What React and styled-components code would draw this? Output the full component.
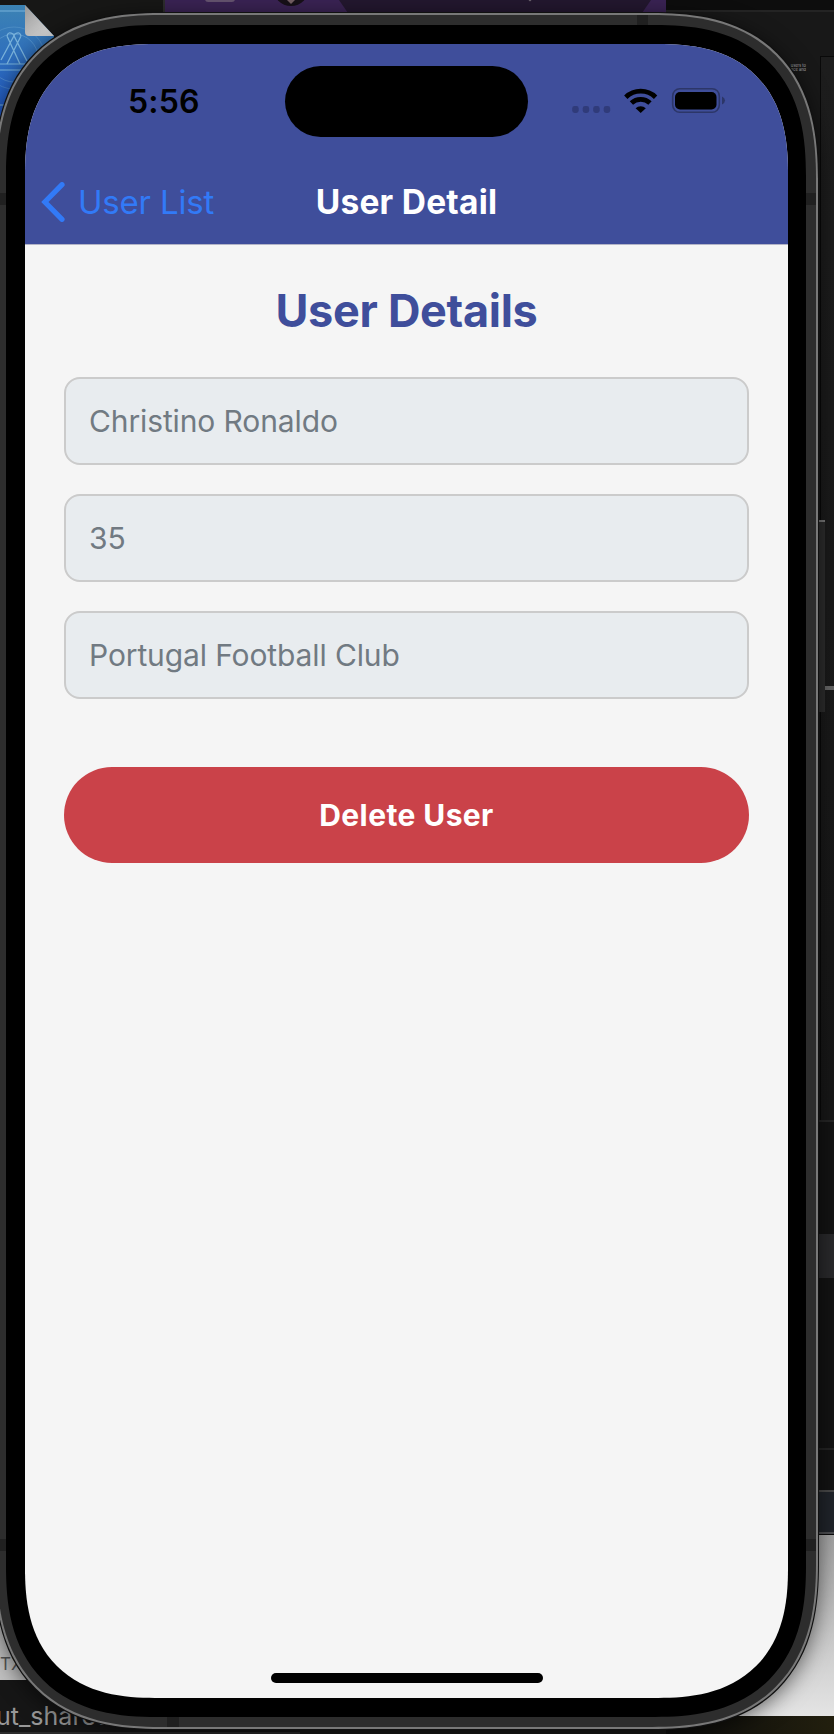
import React from 'react';
import styled, { createGlobalStyle } from 'styled-components';

const Global = createGlobalStyle`
  *{box-sizing:border-box}
  body{margin:0;background:#171716;overflow:hidden;font-family:Inter,"Liberation Sans",sans-serif}
`;
const Desktop = styled.main`
  position:relative;width:834px;height:1734px;overflow:hidden;background:#171716;
`;
const Backdrop = styled.svg`position:absolute;left:0;top:0;`;
const RightWindows = styled.aside`
  position:absolute;right:0;top:0;width:168px;height:1734px;display:flex;flex-direction:column;
`;
const Strip = styled.div`
  flex:none;height:${p => p.$h}px;background:${p => p.$bg};
`;
const BrowserStrip = styled(Strip)`
  display:flex;flex-direction:column;align-items:flex-end;padding-top:44px;
`;
const EditorEdge = styled.div`
  width:14px;flex:1;background:linear-gradient(#1d1d1d,#171717);border:solid #090909;border-width:1px 0 0 1px;
  padding-top:629px;
`;
const Divider = styled.div`height:4px;background:#656565;`;
const PageSnippet = styled.p`
  position:absolute;right:28px;top:64px;margin:0;font-size:4px;line-height:4px;color:#aaa;white-space:nowrap;
  text-align:right;
`;
const Files = styled.div`
  position:absolute;left:0;bottom:0;width:300px;height:134px;display:flex;flex-direction:column;
`;
const Thumbnail = styled.div`
  height:80px;width:70px;padding:55px 0 0;background:#c0c0c0;color:#555;font-size:17px;line-height:19px;
`;
const FileName = styled.div`
  height:54px;padding-top:20px;background:#161616;border-bottom:2px solid #2b2b2b;color:#989898;
  font-size:25px;line-height:32px;text-indent:-4px;
`;
const SideButton = styled.div`
  position:absolute;left:817px;top:520px;width:8px;height:192px;background:#2d2d2d;border-top:2px solid #777;
`;
const Shell = styled.section`
  position:absolute;left:-5px;top:13px;width:823px;height:1716px;padding:2px;
  border-radius:142px;background:#787878;box-shadow:0 0 0 1px #111,0 4px 22px rgba(0,0,0,.6);
  @supports (corner-shape:superellipse(1.3)){border-radius:166px;corner-shape:superellipse(1.3)}
`;
const Metal = styled.div`
  height:100%;padding:10px 9px 9px;border-radius:140px;
  background:
    linear-gradient(#202020,#202020) 640px 0/11px 12px no-repeat,
    linear-gradient(#202020,#202020) 170px 100%/12px 12px no-repeat,
    linear-gradient(#202020,#202020) 0 178px/100% 12px no-repeat,
    linear-gradient(#202020,#202020) 0 1524px/100% 12px no-repeat,
    #2d2d2d;
  @supports (corner-shape:superellipse(1.3)){border-radius:164px;corner-shape:superellipse(1.3)}
`;
const Bezel = styled.div`
  height:1692px;padding:19px 18px 19px 19px;width:800px;border-radius:130px;background:#000;
  @supports (corner-shape:superellipse(1.3)){border-radius:151px;corner-shape:superellipse(1.3)}
`;
const Screen = styled.div`
  width:763px;height:1654px;display:flex;flex-direction:column;overflow:hidden;background:#f5f5f5;
  border-radius:111px;
  @supports (corner-shape:superellipse(1.3)){border-radius:130px;corner-shape:superellipse(1.3)}
`;
const Header = styled.header`height:201px;flex:none;background:#3f4e9b;border-bottom:1px solid #b3b4c7;`;
const StatusBar = styled.div`
  height:116px;padding-top:22px;display:grid;grid-template-columns:260px 243px 260px;align-items:start;
`;
const Time = styled.time`
  padding:15px 0 0 103px;font-size:32px;line-height:41px;font-weight:600;letter-spacing:.2px;
`;
const Island = styled.div`height:71px;border-radius:36px;background:#000;`;
const Indicators = styled.svg`display:block;width:260px;height:71px;`;
const NavBar = styled.nav`
  height:84px;display:grid;grid-template-columns:260px 243px 260px;align-items:center;
`;
const Back = styled.a`
  display:flex;align-items:center;gap:13px;padding-left:16px;color:#327af7;
  font-size:33px;line-height:42px;letter-spacing:-.2px;white-space:nowrap;
`;
const Title = styled.h1`
  margin:0;text-align:center;color:#fff;font-size:33.5px;line-height:42px;font-weight:700;
  letter-spacing:.25px;white-space:nowrap;
`;
const Content = styled.div`flex:1;display:flex;flex-direction:column;padding:38px 39px 0;`;
const Heading = styled.h2`
  margin:0 0 38px;height:56px;text-align:center;color:#3f4e9b;font-size:45px;line-height:56px;
  font-weight:700;letter-spacing:-.3px;
`;
const Fields = styled.div`display:flex;flex-direction:column;gap:29px;`;
const Field = styled.div`
  height:88px;padding:0 23px;display:flex;align-items:center;border:2px solid #cbcbcb;border-radius:16px;
  background:#e8ecef;color:#717a82;font-size:30px;letter-spacing:-.12px;
`;
const DeleteButton = styled.button`
  margin-top:68px;height:96px;border:0;border-radius:48px;background:#ca4249;color:#fff;
  font:700 30px Inter,"Liberation Sans",sans-serif;letter-spacing:.4px;
`;
const HomeIndicator = styled.div`width:272px;height:10px;margin:0 auto 15px;border-radius:5px;background:#000;`;

function Background() {
  return (
    <Backdrop width="834" height="1734" viewBox="0 0 834 1734">
      <defs>
        <linearGradient id="file" x1="0" y1="0" x2="0" y2="1">
          <stop stopColor="#3c83b4" /><stop offset="1" stopColor="#1f57c8" />
        </linearGradient>
        <linearGradient id="curl" x1="0" y1="0" x2="1" y2="1">
          <stop stopColor="#999" /><stop offset="1" stopColor="#ddd" />
        </linearGradient>
      </defs>
      <path d="M0 5H25L54 36V120H0Z" fill="url(#file)" />
      <g fill="none" stroke="#79b2db" strokeWidth="1">
        <path d="M0 11H25M0 64H25M0 70H27M0 105H10" />
        <circle cx="14" cy="58" r="24" opacity=".4" /><circle cx="14" cy="58" r="31" opacity=".3" />
        <path d="M7 36Q8 31 13 34L27 61M7 36L20 64M21 36Q20 31 15 34L1 60M21 36L7 64" strokeWidth="1.3" />
      </g>
      <path d="M25 5L54 36H29Q25 36 25 32Z" fill="url(#curl)" />
      <path d="M165 0H666V13H165Z" fill="#3a2354" />
      <path d="M339 0H651L642 13H348Z" fill="#23172f" />
      <path d="M163 0H165V13H163Z" fill="#2d2d2d" />
      <rect x="205" y="-4" width="30" height="6" rx="3" fill="#65536f" />
      <circle cx="291" cy="-12" r="18" fill="#171018" />
      <path d="M287 0H295L291 4Z" fill="#755f64" />
      <circle cx="530" cy="0" r="1.3" fill="#675f6a" />
    </Backdrop>
  );
}

function StatusIcons() {
  return (
    <Indicators viewBox="528 66 260 71">
      <g fill="#303b7a">
        {[572.2, 582.7, 593.2, 603.7].map(x => <rect key={x} x={x} y="106" width="6.5" height="7" rx="2.4" />)}
      </g>
      <g fill="none" stroke="#000" strokeWidth="4.8">
        <path d="M625.8 97.2A21.5 21.5 0 0 1 655.6 97.2" />
        <path d="M631.4 103.1A13.5 13.5 0 0 1 650 103.1" />
      </g>
      <path d="M635.6 108.2A7.5 7.5 0 0 1 645.8 108.2L640.7 113Z" />
      <rect x="672.7" y="88.7" width="46.6" height="23.6" rx="7.2" fill="none" stroke="#2c3668" strokeWidth="1.6" />
      <rect x="675" y="92" width="41.5" height="17.4" rx="5" />
      <path d="M722 96.5Q725 98 725 100.5T722 104.5Z" fill="#2c3668" />
    </Indicators>
  );
}

function OpenWindows() {
  return (
    <RightWindows>
      <Strip $h={10} $bg="#0d0d0d" />
      <Strip $h={2} $bg="#242424" />
      <BrowserStrip $h={1108} $bg="#181818">
        <EditorEdge><Divider /></EditorEdge>
      </BrowserStrip>
      <Strip $h={2} $bg="#252525" />
      <Strip $h={112} $bg="#131313" />
      <Strip $h={44} $bg="#29292b" />
      <Strip $h={170} $bg="#131313" />
      <Strip $h={2} $bg="#242424" />
      <Strip $h={40} $bg="#131313" />
      <Strip $h={2} $bg="#484848" />
      <Strip $h={40} $bg="#20242a" />
      <Strip $h={2} $bg="#4c4d50" />
      <Strip $h={1} $bg="#0c0c0c" />
      <Strip $h={181} $bg="linear-gradient(#a4a4a4,#e4e4e4)" />
      <Strip $h={18} $bg="linear-gradient(90deg,#0c0c0c,#221f0e)" />
      <PageSnippet>users to<br />nce and</PageSnippet>
    </RightWindows>
  );
}

export default function App() {
  return (
    <Desktop>
      <Global />
      <Background />
      <OpenWindows />
      <Files>
        <Thumbnail>TXT</Thumbnail>
        <FileName>ut_shared</FileName>
      </Files>
      <SideButton />
      <Shell>
        <Metal>
          <Bezel>
            <Screen>
              <Header>
                <StatusBar>
                  <Time>5:56</Time>
                  <Island />
                  <StatusIcons />
                </StatusBar>
                <NavBar>
                  <Back>
                    <svg width="24" height="40" viewBox="0 0 24 40" fill="none" stroke="currentColor" strokeWidth="5.2" strokeLinecap="round" strokeLinejoin="miter">
                      <path d="M21 2.7L3.9 20L21 37.3" />
                    </svg>
                    User List
                  </Back>
                  <Title>User Detail</Title>
                </NavBar>
              </Header>
              <Content>
                <Heading>User Details</Heading>
                <Fields>
                  <Field>Christino Ronaldo</Field>
                  <Field>35</Field>
                  <Field>Portugal Football Club</Field>
                </Fields>
                <DeleteButton>Delete User</DeleteButton>
              </Content>
              <HomeIndicator />
            </Screen>
          </Bezel>
        </Metal>
      </Shell>
    </Desktop>
  );
}
